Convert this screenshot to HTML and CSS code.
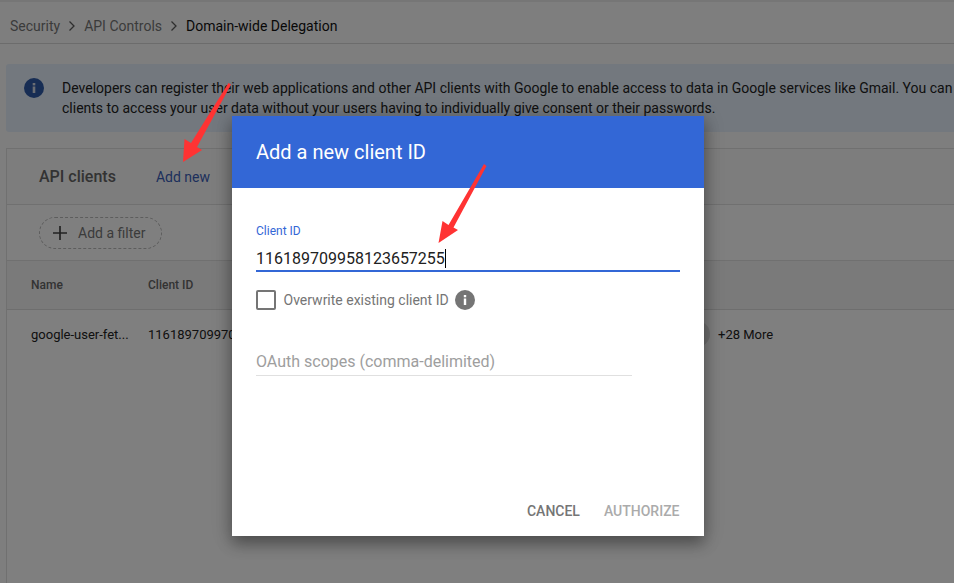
FILE: index.html
```html
<!DOCTYPE html>
<html>
<head>
    <meta charset="UTF-8">
    <title>Domain-wide Delegation</title>
    <link rel="stylesheet" href="styles.css">
</head>
<body>
    <div class="page">
        <nav class="breadcrumb">
            <span>Security</span>
            <svg class="crumb-sep" viewBox="0 0 8 12"><path d="M1.5 1.5 6 6l-4.500 4.500" fill="none" stroke="#5c5c5c" stroke-width="1.300"/></svg>
            <span>API Controls</span>
            <svg class="crumb-sep" viewBox="0 0 8 12"><path d="M1.5 1.5 6 6l-4.500 4.500" fill="none" stroke="#5c5c5c" stroke-width="1.300"/></svg>
            <span class="crumb-current">Domain-wide Delegation</span>
        </nav>

        <div class="banner">
            <svg class="banner-icon" viewBox="0 0 20 20">
                <circle cx="10" cy="10" r="10" fill="#2f5aa8"/>
                <rect x="8.700" y="8.500" width="2.600" height="6.500" fill="#d5dbe6"/>
                <rect x="8.700" y="5" width="2.600" height="2.400" fill="#d5dbe6"/>
            </svg>
            <p class="banner-text">Developers can register their web applications and other API clients with Google to enable access to data in Google services like Gmail. You can<br>clients to access your user data without your users having to individually give consent or their passwords.</p>
        </div>

        <section class="card">
            <div class="card-head">
                <h2 class="card-title">API clients</h2>
                <a class="add-new">Add new</a>
            </div>
            <div class="filter-row">
                <div class="filter-chip">
                    <svg class="plus" viewBox="0 0 14 14"><path d="M7 0v14M0 7h14" stroke="#454545" stroke-width="1.700"/></svg>
                    <span>Add a filter</span>
                </div>
            </div>
            <div class="table-head">
                <span class="col-name">Name</span>
                <span class="col-id">Client ID</span>
            </div>
            <div class="table-row">
                <span class="col-name">google-user-fet...</span>
                <span class="col-id">116189709970</span>
                <span class="scope-dot"></span>
                <span class="more">+28 More</span>
            </div>
        </section>
    </div>

    <div class="scrim"></div>

    <div class="dialog">
        <header class="dialog-head">Add a new client ID</header>
        <div class="dialog-body">
            <label class="field-label">Client ID</label>
            <div class="field-value"><span>116189709958123657255</span><i class="caret"></i></div>
            <div class="check-row">
                <span class="checkbox"></span>
                <span class="check-label">Overwrite existing client ID</span>
                <svg class="info" viewBox="0 0 20 20">
                    <circle cx="10" cy="10" r="10" fill="#757575"/>
                    <rect x="8.800" y="8.500" width="2.400" height="6.500" fill="#fff"/>
                    <rect x="8.800" y="5" width="2.400" height="2.300" fill="#fff"/>
                </svg>
            </div>
            <div class="scopes">OAuth scopes (comma-delimited)</div>
        </div>
        <footer class="dialog-foot">
            <span class="btn-cancel">CANCEL</span>
            <span class="btn-auth">AUTHORIZE</span>
        </footer>
    </div>

    <svg class="arrows" viewBox="0 0 954 583">
        <path d="M183 162 184.500 139 191 143 228.500 83 231 84.500 197 147 202 150Z" fill="#ff3333"/>
        <path d="M438.500 243 442.500 221 448.500 225 484 164 486.500 166 453.500 227.500 458 230Z" fill="#ff3333"/>
    </svg>
</body>
</html>
```

FILE: styles.css
```css
* {
    box-sizing: border-box;
}
html, body {
    margin: 0;
    height: 583px;
    overflow: hidden;
}
body {
    position: relative;
    font-family: Roboto, "Liberation Sans", sans-serif;
    background: #fff;
}
.page {
    height: 583px;
    background: #fdfdfd;
    border-top: 2px solid #ececec;
    color: #222;
}
.breadcrumb {
    display: flex;
    align-items: center;
    height: 42px;
    padding: 6px 0 0 10px;
    font-size: 14px;
    color: #777;
    border-bottom: 1px solid #d8d8d8;
}
.crumb-sep {
    width: 8px;
    height: 12px;
    margin: 0 8px;
}
.crumb-current {
    color: #111;
}
.banner {
    display: flex;
    margin: 20px 0 16px 6px;
    height: 68px;
    padding: 14px 0 0 18px;
    background: #e6f0fc;
    border-radius: 3px 0 0 3px;
    white-space: nowrap;
}
.banner-icon {
    flex: none;
    width: 20px;
    height: 20px;
    margin-right: 18px;
}
.banner-text {
    margin: 0;
    font-size: 14px;
    line-height: 20px;
    color: #222;
}
.card {
    margin-left: 6px;
    border: 1px solid #e0e0e0;
    border-right: 0;
    border-bottom: 0;
    height: 440px;
    background: #fff;
}
.card-head {
    display: flex;
    align-items: center;
    height: 56px;
    padding-left: 32px;
    background: #fafafa;
    border-bottom: 1px solid #e0e0e0;
}
.card-title {
    margin: 0 40px 0 0;
    font-size: 16px;
    font-weight: 500;
    color: #666;
}
.add-new {
    font-size: 14px;
    color: #3a5fb8;
}
.filter-row {
    display: flex;
    align-items: center;
    height: 56px;
    padding-left: 32px;
    border-bottom: 1px solid #e0e0e0;
}
.filter-chip {
    display: flex;
    align-items: center;
    width: 123px;
    height: 32px;
    padding-left: 13px;
    font-size: 14px;
    color: #777;
    border: 1px dashed #bbb;
    border-radius: 16px;
}
.plus {
    width: 14px;
    height: 14px;
    margin-right: 11px;
}
.table-head, .table-row {
    display: flex;
    align-items: center;
    font-size: 12px;
    padding-left: 24px;
}
.table-head {
    height: 49px;
    font-weight: 500;
    color: #666;
    background: #f5f5f5;
    border-bottom: 1px solid #dcdcdc;
}
.table-row {
    height: 48px;
    font-size: 13px;
    color: #222;
}
.col-name {
    width: 117px;
    flex: none;
}
.col-id {
    flex: none;
    width: 542px;
}
.scope-dot {
    flex: none;
    width: 26px;
    height: 26px;
    margin-left: -6px;
    margin-right: 8px;
    border-radius: 50%;
    background: #e0e0e0;
}
.more {
    font-size: 13px;
}
.scrim {
    position: absolute;
    inset: 0;
    background: rgba(0, 0, 0, 0.5);
}
.dialog {
    position: absolute;
    left: 232px;
    top: 116px;
    width: 472px;
    height: 420px;
    display: flex;
    flex-direction: column;
    background: #fff;
    box-shadow: 0 8px 14px rgba(0, 0, 0, 0.3), 0 2px 20px rgba(0, 0, 0, 0.2);
}
.dialog-head {
    flex: none;
    height: 72px;
    padding-left: 24px;
    font-size: 20px;
    line-height: 72px;
    color: #fff;
    background: #3367d6;
}
.dialog-body {
    flex: 1;
    padding: 36px 24px 0;
}
.field-label {
    display: block;
    font-size: 12px;
    line-height: 14px;
    color: #3367d6;
}
.field-value {
    display: flex;
    align-items: center;
    width: 424px;
    height: 27px;
    margin-top: 7px;
    padding-top: 2px;
    font-size: 16px;
    color: #212121;
    border-bottom: 2px solid #3367d6;
}
.caret {
    width: 1px;
    height: 19px;
    background: #000;
}
.check-row {
    display: flex;
    align-items: center;
    margin-top: 18px;
    height: 20px;
}
.checkbox {
    flex: none;
    width: 20px;
    height: 20px;
    border: 2px solid #757575;
    border-radius: 2px;
    margin-right: 7.500px;
}
.check-label {
    font-size: 14px;
    color: #757575;
    margin-right: 6px;
}
.info {
    width: 20px;
    height: 20px;
}
.scopes {
    width: 376px;
    height: 30px;
    margin-top: 36px;
    padding-top: 2px;
    font-size: 16px;
    line-height: 28px;
    color: #9e9e9e;
    border-bottom: 1px solid #e0e0e0;
}
.dialog-foot {
    display: flex;
    justify-content: flex-end;
    gap: 24px;
    height: 62px;
    padding: 29px 24.500px 0 0;
    font-size: 14px;
    font-weight: 500;
}
.btn-cancel {
    color: #757575;
}
.btn-auth {
    color: #ababab;
}
.arrows {
    position: absolute;
    left: 0;
    top: 0;
    width: 954px;
    height: 583px;
}
```
